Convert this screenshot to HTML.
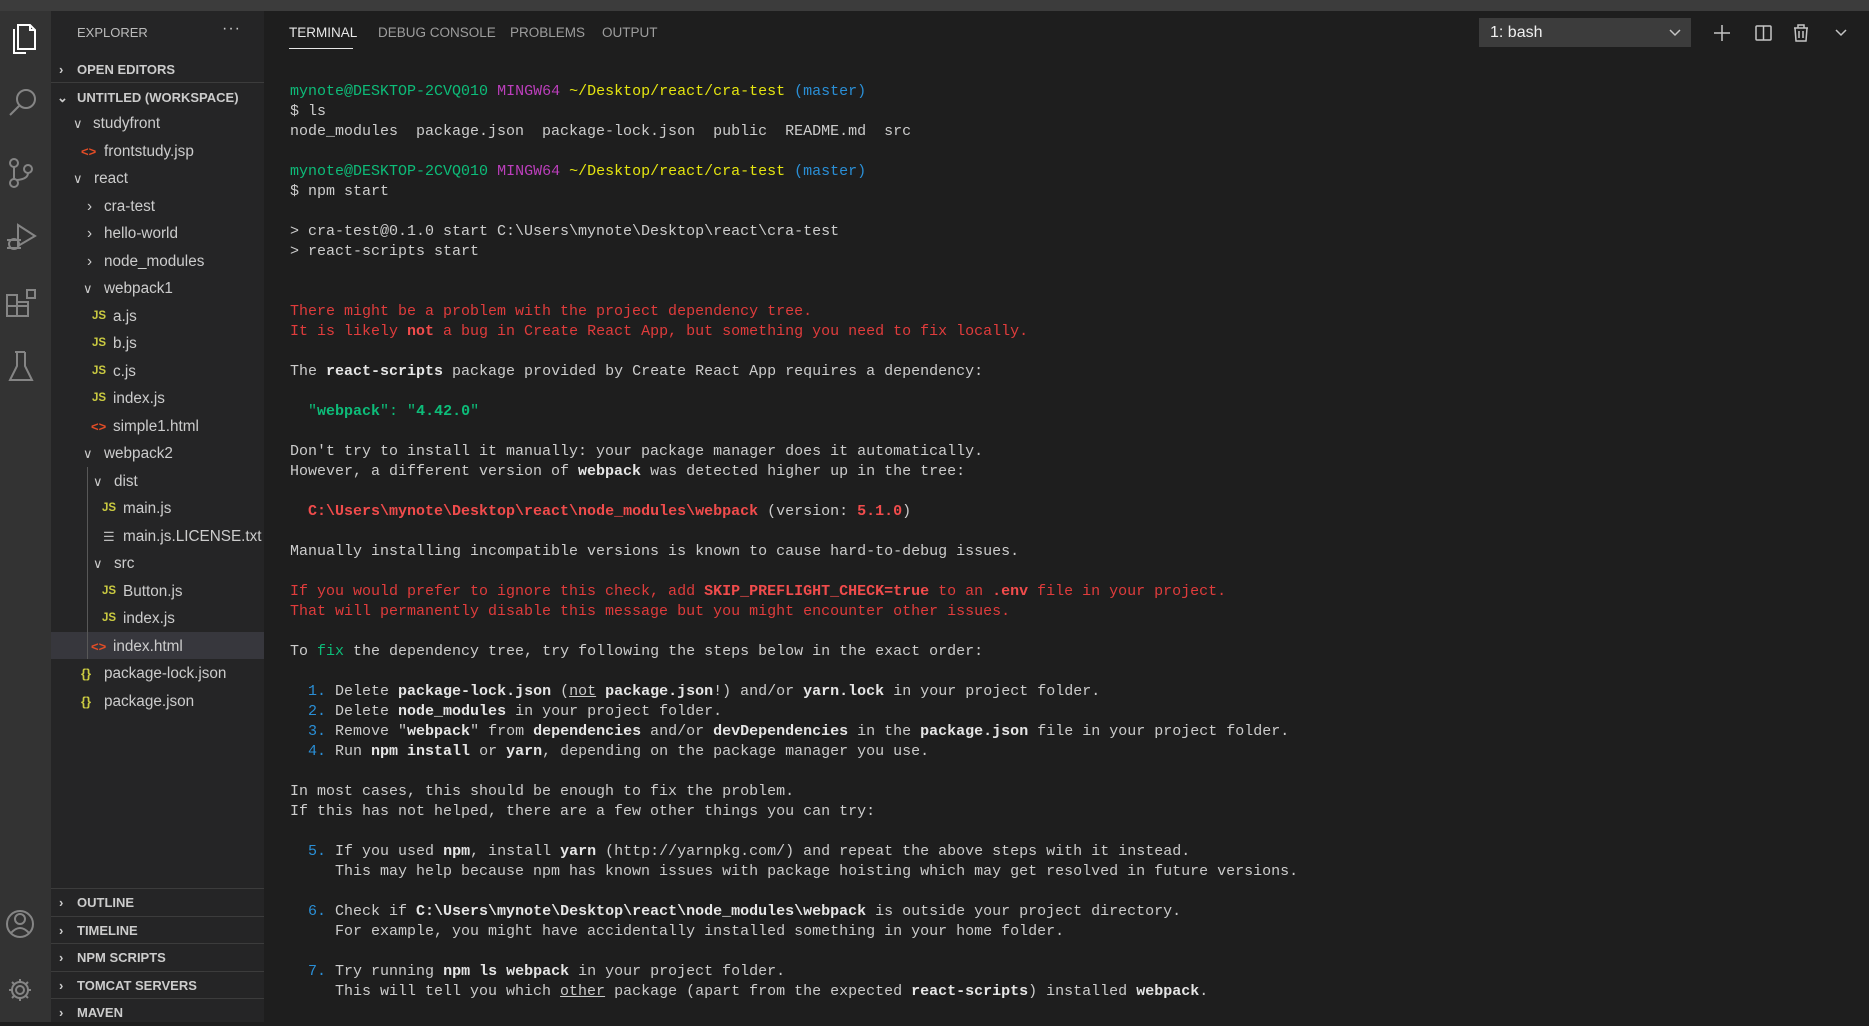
<!DOCTYPE html>
<html><head><meta charset="utf-8"><style>
*{margin:0;padding:0;box-sizing:border-box}
body{width:1869px;height:1022px;background:#1e1e1e;overflow:hidden;position:relative;font-family:"Liberation Sans",sans-serif}
.abs{position:absolute}
#title{left:0;top:0;width:1869px;height:11px;background:#3c3c3c}
#act{left:0;top:11px;width:51px;height:1011px;background:#333333}
#side{left:51px;top:11px;width:213px;height:1011px;background:#252526}
.row{position:absolute;left:51px;width:213px;height:27.5px;line-height:27.5px;font-size:15.3px;color:#cccccc;white-space:nowrap}
.row span{position:absolute;top:0}
.hdr{position:absolute;left:51px;width:213px;height:27px;line-height:27px;font-size:13px;font-weight:bold;color:#cccccc}
.hdr span{position:absolute}
.sep{position:absolute;left:51px;width:213px;height:1px;background:#3c3c3c}
.js{font-size:11.5px;font-weight:bold;color:#cbcb41}
.ht{color:#e44d26;font-size:13px;font-weight:bold}
.br{color:#cbcb41;font-size:13px;font-weight:bold}
pre{position:absolute;left:290px;top:82px;font-family:"Liberation Mono",monospace;font-size:15px;line-height:20px;color:#cccccc}
.g{color:#0dbc79}.m{color:#bc3fbc}.y{color:#e5e510}.bl{color:#2a8fd6}
.r{color:#e03c3c}.R{color:#f14c4c;font-weight:bold}.b{font-weight:bold;color:#e5e5e5}.c{color:#2a8fd6}
.tab{position:absolute;top:22px;font-size:13.5px;color:#9d9d9d;line-height:22px}
</style></head><body>
<div id="title" class="abs"></div>
<div id="act" class="abs">
<svg class="abs" style="left:0;top:0" width="51" height="1011" fill="none" stroke="#858585" stroke-width="2">
<g stroke="#ffffff"><path d="M14 18 L14 42 L26 42 M18 14 L30 14 L35 19 L35 38 L18 38 Z M30 14 L30 19 L35 19"/></g>
<circle cx="26" cy="88" r="9"/><path d="M19 95 L10 104"/>
<circle cx="14" cy="152" r="4"/><circle cx="14" cy="172" r="4"/><circle cx="28" cy="158" r="4"/><path d="M14 156 L14 168 M28 162 Q28 168 17 169"/>
<path d="M18 214 L35 225 L18 235 Z"/><circle cx="14" cy="233" r="5"/><path d="M7 229 L21 229 M7 237 L21 237"/>
<path d="M7 284 L7 305 L28 305 L28 291 L17 291 L17 284 Z M7 295 L28 295 M17 291 L17 305"/><rect x="27" y="279" width="8" height="8"/>
<path d="M15 341 L25 341 M17 341 L17 355 L10 369 L32 369 L25 355 L25 341"/>
<circle cx="20" cy="913" r="13"/><circle cx="20" cy="908" r="5"/><path d="M11 922 Q20 912 29 922"/>
<circle cx="20" cy="979" r="4"/><path d="M20 968 L20 972 M20 986 L20 990 M9 979 L13 979 M27 979 L31 979 M12 971 L15 974 M25 984 L28 987 M12 987 L15 984 M25 974 L28 971"/><circle cx="20" cy="979" r="8"/>
</svg>
</div>
<div id="side" class="abs"></div>
<div class="abs" style="left:77px;top:22px;font-size:13px;color:#bbbbbb;line-height:22px">EXPLORER</div>
<div class="abs" style="left:222px;top:20px;font-size:16px;color:#cccccc;letter-spacing:1px">···</div>
<div class="hdr" style="top:56px"><span style="left:8px">›</span><span style="left:26px">OPEN EDITORS</span></div>
<div class="sep" style="top:82px"></div>
<div class="hdr" style="top:84px"><span style="left:6px">⌄</span><span style="left:26px">UNTITLED (WORKSPACE)</span></div>

<div class="abs" style="left:51px;top:632px;width:213px;height:27px;background:#37373d"></div>
<div class="abs" style="left:87px;top:467px;width:1px;height:192px;background:#585858"></div>

<div class="row" style="top:110px"><span style="left:22px;font-size:13px">∨</span><span style="left:42px">studyfront</span></div>
<div class="row" style="top:138px"><span class="ht" style="left:30px">&lt;&gt;</span><span style="left:53px">frontstudy.jsp</span></div>
<div class="row" style="top:165px"><span style="left:22px;font-size:13px">∨</span><span style="left:43px">react</span></div>
<div class="row" style="top:193px"><span style="left:36px">›</span><span style="left:53px">cra-test</span></div>
<div class="row" style="top:220px"><span style="left:36px">›</span><span style="left:53px">hello-world</span></div>
<div class="row" style="top:248px"><span style="left:36px">›</span><span style="left:53px">node_modules</span></div>
<div class="row" style="top:275px"><span style="left:32px;font-size:13px">∨</span><span style="left:53px">webpack1</span></div>
<div class="row" style="top:303px"><span class="js" style="left:41px">JS</span><span style="left:62px">a.js</span></div>
<div class="row" style="top:330px"><span class="js" style="left:41px">JS</span><span style="left:62px">b.js</span></div>
<div class="row" style="top:358px"><span class="js" style="left:41px">JS</span><span style="left:62px">c.js</span></div>
<div class="row" style="top:385px"><span class="js" style="left:41px">JS</span><span style="left:62px">index.js</span></div>
<div class="row" style="top:413px"><span class="ht" style="left:40px">&lt;&gt;</span><span style="left:62px">simple1.html</span></div>
<div class="row" style="top:440px"><span style="left:32px;font-size:13px">∨</span><span style="left:53px">webpack2</span></div>
<div class="row" style="top:468px"><span style="left:42px;font-size:13px">∨</span><span style="left:63px">dist</span></div>
<div class="row" style="top:495px"><span class="js" style="left:51px">JS</span><span style="left:72px">main.js</span></div>
<div class="row" style="top:523px"><span style="left:52px;font-size:13px;color:#bbbbbb">☰</span><span style="left:72px">main.js.LICENSE.txt</span></div>
<div class="row" style="top:550px"><span style="left:42px;font-size:13px">∨</span><span style="left:63px">src</span></div>
<div class="row" style="top:578px"><span class="js" style="left:51px">JS</span><span style="left:72px">Button.js</span></div>
<div class="row" style="top:605px"><span class="js" style="left:51px">JS</span><span style="left:72px">index.js</span></div>
<div class="row" style="top:633px"><span class="ht" style="left:40px">&lt;&gt;</span><span style="left:62px">index.html</span></div>
<div class="row" style="top:660px"><span class="br" style="left:30px">{}</span><span style="left:53px">package-lock.json</span></div>
<div class="row" style="top:688px"><span class="br" style="left:30px">{}</span><span style="left:53px">package.json</span></div>

<div class="sep" style="top:888px"></div>
<div class="hdr" style="top:889px"><span style="left:8px">›</span><span style="left:26px">OUTLINE</span></div>
<div class="sep" style="top:916px"></div>
<div class="hdr" style="top:917px"><span style="left:8px">›</span><span style="left:26px">TIMELINE</span></div>
<div class="sep" style="top:943px"></div>
<div class="hdr" style="top:944px"><span style="left:8px">›</span><span style="left:26px">NPM SCRIPTS</span></div>
<div class="sep" style="top:971px"></div>
<div class="hdr" style="top:972px"><span style="left:8px">›</span><span style="left:26px">TOMCAT SERVERS</span></div>
<div class="sep" style="top:998px"></div>
<div class="hdr" style="top:999px"><span style="left:8px">›</span><span style="left:26px">MAVEN</span></div>

<div class="tab" style="left:289px;color:#e7e7e7">TERMINAL</div>
<div class="abs" style="left:289px;top:48px;width:64px;height:1px;background:#e7e7e7"></div>
<div class="tab" style="left:378px">DEBUG CONSOLE</div>
<div class="tab" style="left:510px">PROBLEMS</div>
<div class="tab" style="left:602px">OUTPUT</div>

<div class="abs" style="left:1479px;top:18px;width:212px;height:29px;background:#3c3c3c"></div>
<div class="abs" style="left:1490px;top:22px;font-size:16px;color:#f0f0f0;line-height:22px">1: bash</div>
<svg class="abs" style="left:1660px;top:20px" width="209" height="26" fill="none" stroke="#c5c5c5" stroke-width="1.5">
<path d="M10 10 L15 15 L20 10"/>
<path d="M62 5 L62 21 M54 13 L70 13"/>
<rect x="96" y="6" width="15" height="14" rx="1"/><path d="M103.5 6 L103.5 20"/>
<path d="M134 8 L148 8 M138 8 L138 5 L144 5 L144 8 M135 8 L136 21 L146 21 L147 8 M139 11 L139 18 M143 11 L143 18"/>
<path d="M176 10 L181 15 L186 10"/>
</svg>

<pre><span class="g">mynote@DESKTOP-2CVQ010</span> <span class="m">MINGW64</span> <span class="y">~/Desktop/react/cra-test</span> <span class="bl">(master)</span>
$ ls
node_modules  package.json  package-lock.json  public  README.md  src

<span class="g">mynote@DESKTOP-2CVQ010</span> <span class="m">MINGW64</span> <span class="y">~/Desktop/react/cra-test</span> <span class="bl">(master)</span>
$ npm start

&gt; cra-test@0.1.0 start C:\Users\mynote\Desktop\react\cra-test
&gt; react-scripts start


<span class="r">There might be a problem with the project dependency tree.</span>
<span class="r">It is likely <span class="R">not</span> a bug in Create React App, but something you need to fix locally.</span>

The <span class="b">react-scripts</span> package provided by Create React App requires a dependency:

  <span class="g">"<b>webpack</b>": "<b>4.42.0</b>"</span>

Don't try to install it manually: your package manager does it automatically.
However, a different version of <span class="b">webpack</span> was detected higher up in the tree:

  <span class="R">C:\Users\mynote\Desktop\react\node_modules\webpack</span> (version: <span class="R">5.1.0</span>)

Manually installing incompatible versions is known to cause hard-to-debug issues.

<span class="r">If you would prefer to ignore this check, add <span class="R">SKIP_PREFLIGHT_CHECK=true</span> to an <span class="R">.env</span> file in your project.</span>
<span class="r">That will permanently disable this message but you might encounter other issues.</span>

To <span class="g">fix</span> the dependency tree, try following the steps below in the exact order:

  <span class="c">1.</span> Delete <span class="b">package-lock.json</span> (<u>not</u> <span class="b">package.json</span>!) and/or <span class="b">yarn.lock</span> in your project folder.
  <span class="c">2.</span> Delete <span class="b">node_modules</span> in your project folder.
  <span class="c">3.</span> Remove "<span class="b">webpack</span>" from <span class="b">dependencies</span> and/or <span class="b">devDependencies</span> in the <span class="b">package.json</span> file in your project folder.
  <span class="c">4.</span> Run <span class="b">npm install</span> or <span class="b">yarn</span>, depending on the package manager you use.

In most cases, this should be enough to fix the problem.
If this has not helped, there are a few other things you can try:

  <span class="c">5.</span> If you used <span class="b">npm</span>, install <span class="b">yarn</span> (http://yarnpkg.com/) and repeat the above steps with it instead.
     This may help because npm has known issues with package hoisting which may get resolved in future versions.

  <span class="c">6.</span> Check if <span class="b">C:\Users\mynote\Desktop\react\node_modules\webpack</span> is outside your project directory.
     For example, you might have accidentally installed something in your home folder.

  <span class="c">7.</span> Try running <span class="b">npm ls webpack</span> in your project folder.
     This will tell you which <u>other</u> package (apart from the expected <span class="b">react-scripts</span>) installed <span class="b">webpack</span>.</pre>
</body></html>
